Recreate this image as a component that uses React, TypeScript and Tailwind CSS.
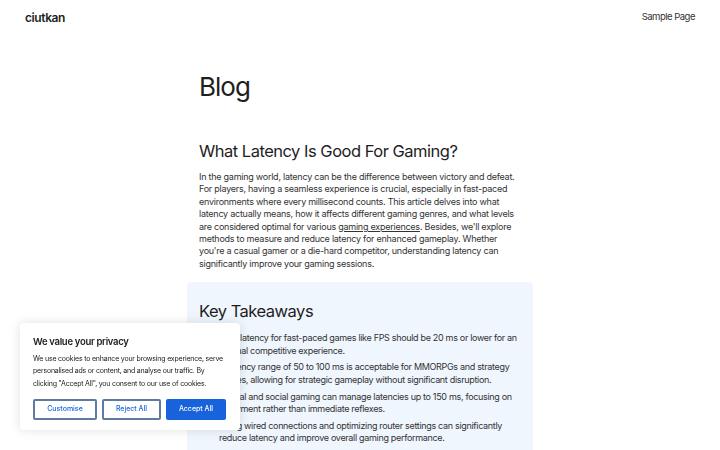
import React from 'react';

const takeaways = [
  'Ideal latency for fast-paced games like FPS should be 20 ms or lower for an optimal competitive experience.',
  'A latency range of 50 to 100 ms is acceptable for MMORPGs and strategy games, allowing for strategic gameplay without significant disruption.',
  'Casual and social gaming can manage latencies up to 150 ms, focusing on enjoyment rather than immediate reflexes.',
  'Using wired connections and optimizing router settings can significantly reduce latency and improve overall gaming performance.',
];

const CookieBanner = () => (
  <div className="fixed left-5 bottom-5 w-[220px] bg-white rounded shadow-[0_0_12px_rgba(0,0,0,0.12)] px-[13px] pt-[12px] pb-[10px]">
    <p className="text-[9.5px] font-semibold text-[#212121] leading-[14px] tracking-[-0.3px]">We value your privacy</p>
    <p className="mt-[4px] text-[7px] leading-[12.5px] text-[#212121] tracking-[-0.2px]">
      We use cookies to enhance your browsing experience, serve personalised ads or content, and analyse our traffic. By clicking "Accept All", you consent to our use of cookies.
    </p>
    <div className="mt-[9px] flex gap-[5px]">
      <button className="w-[64px] h-[21px] border-2 border-[#5d7aa0] rounded-[2px] text-[7px] font-medium text-[#1863dc]">Customise</button>
      <button className="w-[59px] h-[21px] border-2 border-[#5d7aa0] rounded-[2px] text-[7px] font-medium text-[#1863dc]">Reject All</button>
      <button className="w-[60px] h-[21px] bg-[#1863dc] rounded-[2px] text-[7px] font-medium text-white">Accept All</button>
    </div>
  </div>
);

export default function App() {
  return (
    <div className="min-h-screen bg-white text-[#1e1e1e] font-['Inter',sans-serif]">
      <header className="flex items-center justify-between px-[25px] h-[35px]">
        <span className="text-[12px] font-semibold tracking-[-0.4px]">ciutkan</span>
        <a className="text-[9.5px] text-[#333] tracking-[-0.5px]">Sample Page</a>
      </header>

      <main className="mx-auto w-[346px]">
        <h1 className="px-3 mt-[35px] text-[26px] leading-[34px] font-normal tracking-[-1px]">Blog</h1>

        <h2 className="px-3 mt-[35px] text-[16.5px] leading-[24px] font-normal tracking-[-0.5px]">What Latency Is Good For Gaming?</h2>
        <p className="px-3 mt-[8px] text-[9px] leading-[12.4px] text-[#333] tracking-[-0.25px]">
          In the gaming world, latency can be the difference between victory and defeat. For players, having a seamless experience is crucial, especially in fast-paced environments where every millisecond counts. This article delves into what latency actually means, how it affects different gaming genres, and what levels are considered optimal for various <span className="underline">gaming experiences</span>. Besides, we'll explore methods to measure and reduce latency for enhanced gameplay. Whether you're a casual gamer or a die-hard competitor, understanding latency can significantly improve your gaming sessions.
        </p>

        <section className="mt-[12px] bg-[#eff6fe] rounded-[3px] px-3 pt-[17px] pb-4">
          <h2 className="text-[16.5px] leading-[24px] font-normal tracking-[-0.5px]">Key Takeaways</h2>
          <ul className="mt-[9px] pl-5 list-disc text-[9px] leading-[12.6px] text-[#333] tracking-[-0.32px] flex flex-col gap-[4px]">
            {takeaways.map((t) => (
              <li key={t}>{t}</li>
            ))}
          </ul>
        </section>
      </main>

      <CookieBanner />
    </div>
  );
}
